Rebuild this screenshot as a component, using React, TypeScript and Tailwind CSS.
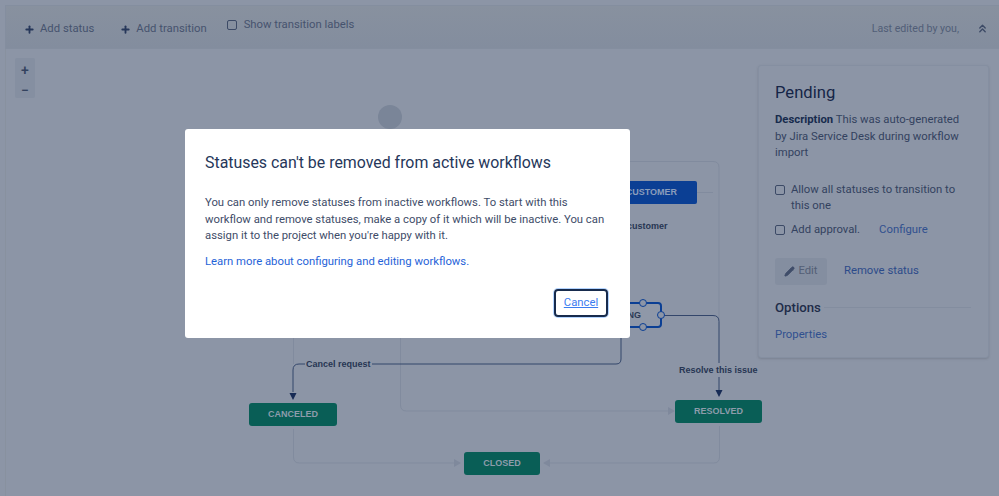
import { ChevronsUp, Pencil, Plus } from "lucide-react"

const font = { fontFamily: 'Roboto, "Noto Sans", sans-serif' }
const arial = { fontFamily: '"Liberation Sans", sans-serif' }

function Diagram() {
  return (
    <svg className="absolute left-0 top-0 w-[999px] h-[447px]" viewBox="0 49 999 447" fill="none">
      <path d="M5.500 49V496" stroke="#88919f" />
      <circle cx="390" cy="117" r="12" fill="#7a8598" />
      {/* inactive transitions */}
      <g stroke="#818b9e" strokeWidth="1">
        <path d="M400.500 330V405q0 6 6 6H668" />
        <path d="M293.500 330V364" />
        <path d="M293.500 429V457q0 6 6 6H454" />
        <path d="M719.500 426V457q0 6 -6 6H550" />
        <path d="M600 161.500H713q6 0 6 6V320" />
        <path d="M697 192.500H713" />
      </g>
      <path d="M668 407l7 4-7 4zM454 459l7 4-7 4zM550 459l-7 4 7 4z" fill="#7f899c" />
      {/* selected transitions */}
      <g stroke="#33466b" strokeWidth="1">
        <path d="M621 330V359q0 5 -5 5H299q-6 0 -6 6V392" />
        <path d="M663 315.500H713q6 0 6 6V392" />
      </g>
      <path d="M289.500 393h7l-3.500 7zM715.500 390h7l-3.500 7z" fill="#172b55" />
    </svg>
  )
}

function StatusNode({ label, className }: { label: string; className: string }) {
  return (
    <div className={`absolute flex items-center justify-center rounded-[3px] bg-[#095e56] font-bold text-[9px] text-[#8d9cab] ${className}`} style={arial}>
      {label}
    </div>
  )
}

function EdgeLabel({ label, className }: { label: string; className: string }) {
  return (
    <span className={`absolute bg-[#8c95a6] text-[9px] leading-[12px] font-bold text-[#273553] ${className}`} style={arial}>
      {label}
    </span>
  )
}

function Handle({ className }: { className: string }) {
  return <span className={`absolute w-[8px] h-[8px] rounded-full border border-[#0b3f94] bg-[#8c95a6] ${className}`} />
}

function SidePanel() {
  return (
    <aside className="absolute left-[758px] top-[16px] w-[231px] h-[293px] rounded-[3px] border border-[#858fa1] bg-[#8c95a6] px-[16px] pt-[16px] shadow-sm text-[11.300px] leading-[16.600px] text-[#33425f]">
      <h2 className="text-[16.600px] leading-[22px] text-[#152547]">Pending</h2>
      <p className="mt-[8px]">
        <b className="font-bold text-[#172b4d]">Description</b> This was auto-generated by Jira Service Desk during workflow import
      </p>
      <label className="mt-[20px] flex items-start gap-[6px]">
        <span className="mt-[3px] w-[10px] h-[10px] shrink-0 rounded-[2px] border border-[#3c4a66]" />
        <span>Allow all statuses to transition to this one</span>
      </label>
      <div className="mt-[7px] flex items-center">
        <span className="mr-[6px] w-[10px] h-[10px] rounded-[2px] border border-[#3c4a66]" />
        <span>Add approval.</span>
        <a className="ml-[19px] text-[#30508f]">Configure</a>
      </div>
      <div className="mt-[19px] flex items-center">
        <button className="flex h-[27px] w-[52px] items-center justify-center gap-[3px] rounded-[3px] bg-[#848ea0] text-[#535f76]">
          <Pencil size={11} fill="#3f4d69" stroke="#3f4d69" />
          Edit
        </button>
        <a className="ml-[17px] text-[#2c4b8a]">Remove status</a>
      </div>
      <div className="mt-[15px] flex items-center">
        <h3 className="text-[13.200px] font-medium text-[#1e2c49]">Options</h3>
        <span className="ml-[3px] mr-[1px] h-px flex-1 bg-[#838d9f]" />
      </div>
      <a className="mt-[11px] block text-[#30508f]">Properties</a>
    </aside>
  )
}

export default function App() {
  return (
    <div className="relative flex flex-col w-[999px] h-[496px] overflow-hidden bg-[#8c95a6] pt-[5px]" style={font}>
      <header className="flex h-[44px] items-start border-y border-l border-[#848e9f] bg-gradient-to-b from-[#88919f] to-[#838d9e] ml-[5px] text-[11.300px] text-[#46536e]">
        <button className="ml-[18px] mt-[15px] flex items-center gap-[5px]">
          <Plus size={11} strokeWidth={4} className="text-[#26375a]" />
          Add status
        </button>
        <button className="ml-[26px] mt-[15px] flex items-center gap-[5px]">
          <Plus size={11} strokeWidth={4} className="text-[#26375a]" />
          Add transition
        </button>
        <label className="ml-[20px] mt-[11px] flex items-center gap-[7px]">
          <span className="w-[10px] h-[10px] rounded-[2px] border border-[#3c4a66]" />
          Show transition labels
        </label>
        <span className="ml-auto mt-[15px] text-[10.600px] text-[#515e77]">Last edited by you,</span>
        <ChevronsUp size={13} strokeWidth={2.5} className="ml-[17px] mr-[10px] mt-[16px] text-[#3c4a66]" />
      </header>

      <main className="relative flex-1">
        <Diagram />
        <div className="absolute left-[15px] top-[9px] flex w-[20px] h-[40px] flex-col items-center rounded-[2px] bg-[#858fa1] pt-[2px] text-[#33425f] text-[14px] font-medium">
          <span className="h-[20px] leading-[20px]">+</span>
          <span className="h-[18px] leading-[20px]">−</span>
        </div>

        <div className="absolute left-[540px] top-[132px] flex w-[157px] h-[23px] items-center justify-end rounded-[2px] bg-[#0b3f94] pr-[20px] text-[9px] font-bold text-[#8a9dbb]" style={arial}>
          WAITING FOR CUSTOMER
        </div>
        <EdgeLabel label="Respond to customer" className="left-[575px] top-[171px]" />

        <div className="absolute left-[560px] top-[253px] flex w-[102px] h-[26px] items-center justify-end rounded-[4px] border-2 border-[#0b3f94] bg-[#8f98a8] pr-[19px] pt-px text-[9px] font-bold text-[#2c3a55]" style={arial}>
          PENDING
          <Handle className="left-[77px] -top-[5px]" />
          <Handle className="left-[77px] -bottom-[5px]" />
          <Handle className="-right-[5px] top-[7px]" />
        </div>

        <EdgeLabel label="Cancel request" className="left-[305px] top-[309px] px-[1px]" />
        <EdgeLabel label="Resolve this issue" className="left-[679px] top-[314px] py-[1px]" />
        <StatusNode label="CANCELED" className="left-[249px] top-[354px] w-[88px] h-[23px]" />
        <StatusNode label="RESOLVED" className="left-[675px] top-[351px] w-[87px] h-[23px]" />
        <StatusNode label="CLOSED" className="left-[464px] top-[403px] w-[76px] h-[23px]" />

        <SidePanel />
      </main>

      <div className="absolute left-[185px] top-[129px] w-[445px] h-[209px] rounded-[3px] bg-white pl-[20px] pr-[22px] pt-[22px] text-[#26375a]">
        <h1 className="text-[15.900px] leading-[24px]">Statuses can't be removed from active workflows</h1>
        <p className="mt-[20px] text-[11.300px] leading-[16.600px] text-[#3e4c68]">
          You can only remove statuses from inactive workflows. To start with this workflow and remove statuses, make a copy of it which will be inactive. You can assign it to the project when you're happy with it.
        </p>
        <a className="mt-[9px] block text-[11.300px] leading-[16.600px] text-[#1f63d8]">Learn more about configuring and editing workflows.</a>
        <div className="mt-[19px] flex justify-end">
          <button className="flex h-[28px] w-[54px] items-center justify-center rounded-[4px] border-2 border-[#172b4d] pt-px text-[11.300px] text-[#3b7cf0] underline shadow-[0_0_0_1px_#b3d4ff]">
            Cancel
          </button>
        </div>
      </div>
    </div>
  )
}
